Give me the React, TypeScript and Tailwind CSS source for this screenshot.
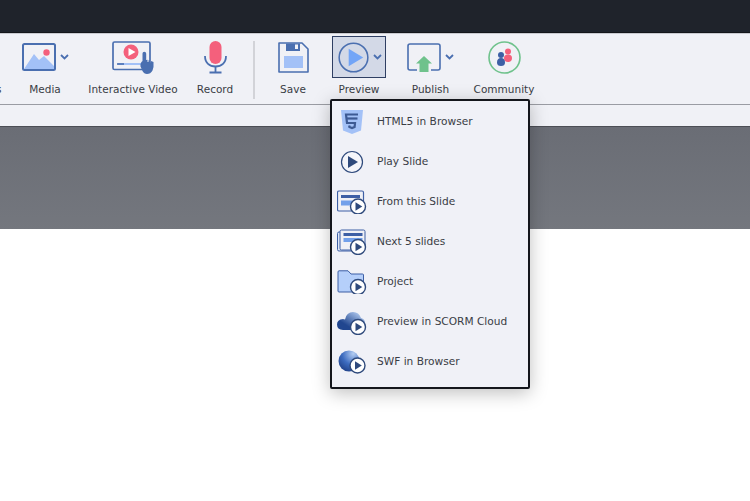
import React from "react";

const font = "font-['Lucida_Grande','DejaVu_Sans',sans-serif]";

const PlayBadge = ({ cx, cy, r = 7.5 }: { cx: number; cy: number; r?: number }) => (
  <g>
    <circle cx={cx} cy={cy} r={r} fill="#fff" stroke="#2f4a7c" strokeWidth="1.4" />
    <path d={`M${cx - 2.5} ${cy - 4.2}L${cx + 4.3} ${cy}L${cx - 2.5} ${cy + 4.2}Z`} fill="#2f4a7c" />
  </g>
);

const MediaIcon = () => (
  <svg width="34" height="28" viewBox="0 0 34 28">
    <rect x="1" y="1" width="32" height="26" rx="1.5" fill="#f0f1f6" stroke="#4a6fb0" strokeWidth="2" />
    <path d="M2 26L12 11L17 17L22 13L32 23V26Z" fill="#a3c1f7" />
    <circle cx="24.5" cy="9.500" r="3.200" fill="#f4607c" />
  </svg>
);

const VideoIcon = () => (
  <svg width="42" height="33" viewBox="0 0 42 33">
    <rect x="1" y="1" width="37" height="27.500" rx="1.500" fill="#f0f1f6" stroke="#4a6fb0" strokeWidth="1.700" />
    <circle cx="19" cy="11" r="7.500" fill="#f4607c" />
    <path d="M16.500 7L23.500 11L16.500 15Z" fill="#fff" />
    <path d="M6 23H30" stroke="#a3c1f7" strokeWidth="2" />
    <path d="M5 23H12" stroke="#4a6fb0" strokeWidth="1.600" />
    <path d="M30.500 20V12.500Q30.500 10.800 32.300 10.800T34.200 12.500V19L35.500 18.800V21H36.500V19.200L38 19.400V21.500H39V20L41.500 21Q42 26 40.500 29.500Q38.500 33 35 33Q32 33 30.500 30L28.500 25.500Q28 22 30.500 20Z" fill="#4a6fb0" />
  </svg>
);

const MicIcon = () => (
  <svg width="23" height="33" viewBox="0 0 23 33">
    <rect x="5.500" y="0" width="12" height="23" rx="6" fill="#f4607c" />
    <path d="M1 15C1 22 5.500 25.500 11.500 25.500S22 22 22 15" fill="none" stroke="#4a6fb0" strokeWidth="1.800" />
    <path d="M11.500 25.500V31M5.500 31.500H17.500" stroke="#4a6fb0" strokeWidth="1.800" />
  </svg>
);

const SaveIcon = () => (
  <svg width="31" height="31" viewBox="0 0 31 31">
    <path d="M1 1H24L30 7V30H1Z" fill="#f0f1f6" stroke="#4a6fb0" strokeWidth="1.600" strokeLinejoin="round" />
    <path d="M8 1.500H22V9H8Z" fill="#4a6fb0" />
    <rect x="17" y="2.500" width="3" height="4.500" fill="#f0f1f6" />
    <rect x="6" y="14" width="19" height="12" fill="#a3c1f7" />
  </svg>
);

const PreviewIcon = () => (
  <svg width="31" height="31" viewBox="0 0 32 32">
    <circle cx="16" cy="16" r="14.800" fill="none" stroke="#4a6fb0" strokeWidth="1.600" />
    <path d="M11 7L26 16L11 25Z" fill="#72a5f7" />
  </svg>
);

const PublishIcon = () => (
  <svg width="34" height="29" viewBox="0 0 34 29">
    <path d="M10 27H3Q1 27 1 25V3Q1 1 3 1H31Q33 1 33 3V25Q33 27 31 27H24" fill="none" stroke="#4a6fb0" strokeWidth="1.600" />
    <path d="M17 13L25 20.500H21.500V29H12.500V20.500H9Z" fill="#6fc28c" />
  </svg>
);

const CommunityIcon = () => (
  <svg width="33" height="33" viewBox="0 0 33 33">
    <circle cx="16.500" cy="16.500" r="15.500" fill="#f0f1f6" stroke="#6fc28c" strokeWidth="1.600" />
    <circle cx="20" cy="10.500" r="3" fill="#f4607c" />
    <path d="M16 17Q16 13.500 20 13.500T24 17Q24 21 20 21T16 17Z" fill="#f4607c" />
    <circle cx="13" cy="14" r="3" fill="#3d5fa5" />
    <path d="M9 21.500Q9 17 13 17T17 21.500Q17 25 13 25T9 21.500Z" fill="#3d5fa5" />
  </svg>
);

const Chevron = () => (
  <svg width="9" height="6" viewBox="0 0 9 6" className="shrink-0">
    <path d="M1 1L4.500 4.500L8 1" fill="none" stroke="#4a6fb0" strokeWidth="1.800" />
  </svg>
);

const Html5Icon = () => (
  <svg width="24" height="24" viewBox="0 0 24 24">
    <path d="M1 0H23L21 20.500L12 24L3 20.500Z" fill="#a3c1f7" />
    <path d="M18 4.500H6L7 13H15L14.600 17L12 18L9.400 17L9.200 15.500" fill="none" stroke="#3d5a94" strokeWidth="2.200" />
    <path d="M6.500 8.500H17.500" stroke="#3d5a94" strokeWidth="2.200" />
  </svg>
);

const PlaySlideIcon = () => (
  <svg width="30" height="24" viewBox="0 0 30 24">
    <circle cx="15" cy="12" r="10.500" fill="#f4f5fa" stroke="#2f4a7c" strokeWidth="1.200" />
    <path d="M11 6L21 12L11 18Z" fill="#2f4a7c" />
  </svg>
);

const FromSlideIcon = () => (
  <svg width="30" height="24" viewBox="0 0 30 24">
    <rect x="0.500" y="1" width="26" height="20" rx="1.500" fill="#f0f1f6" stroke="#3d5fa5" strokeWidth="1.200" />
    <rect x="4" y="5" width="19" height="3" fill="#3d5fa5" />
    <rect x="4" y="10.500" width="11" height="5" fill="#72a0ea" />
    <PlayBadge cx={21} cy={16.500} />
  </svg>
);

const NextSlidesIcon = () => (
  <svg width="30" height="26" viewBox="0 0 30 26">
    <rect x="0.500" y="3" width="22" height="19" rx="1.500" fill="#dfe7f7" stroke="#3d5fa5" />
    <rect x="3" y="1" width="25" height="20" rx="1.500" fill="#f0f1f6" stroke="#3d5fa5" />
    <rect x="6.500" y="4" width="19" height="3" fill="#3d5fa5" />
    <rect x="6.500" y="9" width="19" height="4" fill="#72a0ea" />
    <PlayBadge cx={21} cy={18} />
  </svg>
);

const FolderIcon = () => (
  <svg width="30" height="24" viewBox="0 0 30 24">
    <path d="M1 2Q1 .8 2 .8H11L14 4H25.500Q26.500 4 26.500 5V21Q26.500 22 25.500 22H2Q1 22 1 21Z" fill="#b5cffa" stroke="#3d5fa5" />
    <PlayBadge cx={21} cy={17} />
  </svg>
);

const CloudIcon = () => (
  <svg width="30" height="26" viewBox="0 0 30 26">
    <defs>
      <linearGradient id="cloud" x1="0" y1="0.800" x2="0.800" y2="0">
        <stop offset="0.250" stopColor="#21468f" />
        <stop offset="1" stopColor="#b4cdf2" />
      </linearGradient>
    </defs>
    <path d="M6 21Q0 20.500 0 15.500T6 10Q7 10 8 10.500Q9.500 3 16 3Q22 3 24 9Q28 10 28 14T24 21H6Z" fill="url(#cloud)" />
    <PlayBadge cx={21} cy={18} />
  </svg>
);

const GlobeIcon = () => (
  <svg width="30" height="24" viewBox="0 0 30 24">
    <defs>
      <radialGradient id="globe" cx="0.700" cy="0.150" r="0.950">
        <stop offset="0" stopColor="#b4cdf2" />
        <stop offset="0.550" stopColor="#3d6cc0" />
        <stop offset="1" stopColor="#1f3f86" />
      </radialGradient>
    </defs>
    <circle cx="12" cy="11" r="10.500" fill="url(#globe)" />
    <PlayBadge cx={20.500} cy={15.500} />
  </svg>
);

const items = [
  { label: "HTML5 in Browser", icon: <Html5Icon /> },
  { label: "Play Slide", icon: <PlaySlideIcon /> },
  { label: "From this Slide", icon: <FromSlideIcon /> },
  { label: "Next 5 slides", icon: <NextSlidesIcon /> },
  { label: "Project", icon: <FolderIcon /> },
  { label: "Preview in SCORM Cloud", icon: <CloudIcon /> },
  { label: "SWF in Browser", icon: <GlobeIcon /> },
];

const ToolLabel = ({ children }: { children: React.ReactNode }) => (
  <span className="text-[10.500px] leading-[14px] text-[#3a3d45] whitespace-nowrap">{children}</span>
);

const Tool = ({ label, className, children }: { label: string; className: string; children: React.ReactNode }) => (
  <div className={`${className} shrink-0 flex flex-col items-center`}>
    <div className="h-[48px] flex items-center justify-center gap-[4px] pb-[2px]">{children}</div>
    <ToolLabel>{label}</ToolLabel>
  </div>
);

export default function App() {
  return (
    <div className={`relative w-[750px] h-[501px] overflow-hidden bg-white ${font}`}>
      {/* Title bar */}
      <div className="h-[33px] bg-[#1f232b] border-b border-[#14161b]" />

      {/* Toolbar */}
      <div className="h-[72px] bg-[#f0f1f6] border-t border-[#c9cad0] border-b border-b-[#9a9ca3] flex">
        <div className="w-[13px] shrink-0 overflow-hidden flex justify-start">
          <span className="text-[10.500px] leading-[14px] text-[#3a3d45] mt-[48px] -ml-[4px]">s</span>
        </div>
        <Tool label="Media" className="w-[64px]">
          <MediaIcon />
          <Chevron />
        </Tool>
        <Tool label="Interactive Video" className="w-[96px] ml-[8px]">
          <VideoIcon />
        </Tool>
        <Tool label="Record" className="w-[46px] ml-[11px]">
          <MicIcon />
        </Tool>
        <div className="w-[2px] h-[58px] bg-[#d2d3d8] mt-[7px] ml-[15px]" />
        <Tool label="Save" className="w-[38px] ml-[19px]">
          <SaveIcon />
        </Tool>
        <div className="w-[54px] ml-[20px] flex flex-col items-center">
          <div className="h-[42px] w-[54px] mt-[2px] mb-[4px] bg-[#d3d9e7] border border-[#2f3f63] flex items-center gap-[4px] pl-[5px]">
            <PreviewIcon />
            <Chevron />
          </div>
          <ToolLabel>Preview</ToolLabel>
        </div>
        <Tool label="Publish" className="w-[45px] ml-[22px]">
          <PublishIcon />
          <Chevron />
        </Tool>
        <Tool label="Community" className="w-[62px] ml-[20px]">
          <CommunityIcon />
        </Tool>
      </div>

      {/* Ribbon strip */}
      <div className="h-[22px] bg-[#f0f1f6] border-b border-[#4c4e55]" />

      {/* Stage */}
      <div className="h-[102px] bg-gradient-to-b from-[#6a6d75] to-[#74777e]" />

      {/* Preview dropdown */}
      <div className="absolute left-[330px] top-[99px] w-[200px] h-[290px] bg-[#f0f1f7] border-2 border-[#14161c] rounded-[2px] shadow-[0_4px_18px_rgba(0,0,0,0.25)] pt-[1px]">
        {items.map((it) => (
          <div key={it.label} className="h-[40px] flex items-center">
            <div className="w-[30px] ml-[5px] flex items-center justify-center">{it.icon}</div>
            <span className="ml-[10px] text-[10.600px] text-[#3a3d45] whitespace-nowrap">{it.label}</span>
          </div>
        ))}
      </div>
    </div>
  );
}
